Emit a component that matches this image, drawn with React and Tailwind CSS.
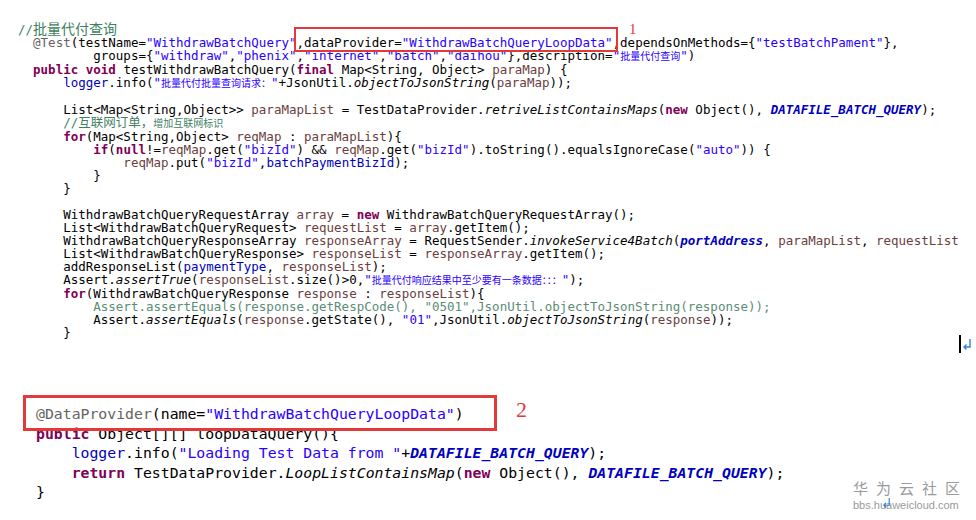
const K = ({ children }) => <span className="font-bold text-[#7f0055]">{children}</span>;
const S = ({ children }) => <span className="text-[#2a00ff]">{children}</span>;
const V = ({ children }) => <span className="text-[#6a3e3e]">{children}</span>;
const F = ({ children }) => <span className="text-[#0000c0]">{children}</span>;
const FI = ({ children }) => <span className="font-bold italic text-[#0000c0]">{children}</span>;
const I = ({ children }) => <span className="italic">{children}</span>;
const A = ({ children }) => <span className="text-[#646464]">{children}</span>;
const C = ({ children }) => <span className="text-[#3f7f5f]">{children}</span>;
const Z = ({ children }) => <span className="text-[10px]">{children}</span>;

function Ln({ ind = 0, children }) {
  return (
    <div>
      {" ".repeat(ind)}
      {children}
    </div>
  );
}

const mono = "font-['DejaVu_Sans_Mono','Noto_Sans_CJK_SC',monospace]";

export default function App() {
  return (
    <div className="relative w-[976px] h-[520px] overflow-hidden bg-white">
      {/* test method */}
      <div className={`${mono} pl-[18px] pt-[23px] text-[12.5px] leading-[13px] text-black whitespace-pre`}>
        <Ln>
          <C>
            //<span className="text-[14px]">批量代付查询</span>
          </C>
        </Ln>
        <Ln ind={2}>
          <A>@Test</A>(testName=<S>"WithdrawBatchQuery"</S>,dataProvider=<S>"WithdrawBatchQueryLoopData"</S>
          ,dependsOnMethods={"{"}
          <S>"testBatchPament"</S>
          {"},"}
        </Ln>
        <Ln ind={10}>
          groups={"{"}
          <S>"withdraw"</S>,<S>"phenix"</S>,<S>"internet"</S>,<S>"batch"</S>,<S>"daihou"</S>
          {"}"},description=
          <S>
            "<Z>批量代付查询</Z>"
          </S>
          )
        </Ln>
        <Ln ind={2}>
          <K>public</K> <K>void</K> testWithdrawBatchQuery(<K>final</K> Map&lt;String, Object&gt; <V>paraMap</V>) {"{"}
        </Ln>
        <Ln ind={6}>
          <F>logger</F>.info(
          <S>
            "<Z>批量代付批量查询请求：</Z>"
          </S>
          +JsonUtil.<I>objectToJsonString</I>(<V>paraMap</V>));
        </Ln>
        <Ln> </Ln>
        <Ln ind={6}>
          List&lt;Map&lt;String,Object&gt;&gt; <V>paraMapList</V> = TestDataProvider.<I>retriveListContainsMaps</I>(
          <K>new</K> Object(), <FI>DATAFILE_BATCH_QUERY</FI>);
        </Ln>
        <Ln ind={6}>
          <C>
            //<span className="text-[12.5px]">互联网订单，</span>
            <Z>增加互联网标识</Z>
          </C>
        </Ln>
        <Ln ind={6}>
          <K>for</K>(Map&lt;String,Object&gt; <V>reqMap</V> : <V>paraMapList</V>){"{"}
        </Ln>
        <Ln ind={10}>
          <K>if</K>(<K>null</K>!=<V>reqMap</V>.get(<S>"bizId"</S>) &amp;&amp; <V>reqMap</V>.get(<S>"bizId"</S>
          ).toString().equalsIgnoreCase(<S>"auto"</S>)) {"{"}
        </Ln>
        <Ln ind={14}>
          <V>reqMap</V>.put(<S>"bizId"</S>,<F>batchPaymentBizId</F>);
        </Ln>
        <Ln ind={10}>{"}"}</Ln>
        <Ln ind={6}>{"}"}</Ln>
        <Ln> </Ln>
        <Ln ind={6}>
          WithdrawBatchQueryRequestArray <V>array</V> = <K>new</K> WithdrawBatchQueryRequestArray();
        </Ln>
        <Ln ind={6}>
          List&lt;WithdrawBatchQueryRequest&gt; <V>requestList</V> = <V>array</V>.getItem();
        </Ln>
        <Ln ind={6}>
          WithdrawBatchQueryResponseArray <V>responseArray</V> = RequestSender.<I>invokeService4Batch</I>(
          <FI>portAddress</FI>, <V>paraMapList</V>, <V>requestList</V>
        </Ln>
        <Ln ind={6}>
          List&lt;WithdrawBatchQueryResponse&gt; <V>responseList</V> = <V>responseArray</V>.getItem();
        </Ln>
        <Ln ind={6}>
          addResponseList(<F>paymentType</F>, <V>responseList</V>);
        </Ln>
        <Ln ind={6}>
          Assert.<I>assertTrue</I>(<V>responseList</V>.size()&gt;0,
          <S>
            "<Z>批量代付响应结果中至少要有一条数据：：：</Z>"
          </S>
          );
        </Ln>
        <Ln ind={6}>
          <K>for</K>(WithdrawBatchQueryResponse <V>response</V> : <V>responseList</V>){"{"}
        </Ln>
        <Ln ind={10}>
          <span className="text-[#5b8c76]">
            Assert.assertEquals(response.getRespCode(), "0501",JsonUtil.objectToJsonString(response));
          </span>
        </Ln>
        <Ln ind={10}>
          Assert.<I>assertEquals</I>(<V>response</V>.getState(), <S>"01"</S>,JsonUtil.<I>objectToJsonString</I>(
          <V>response</V>));
        </Ln>
        <Ln ind={6}>{"}"}</Ln>
      </div>

      {/* data provider */}
      <div className={`${mono} mt-[65px] pl-[36px] text-[14.8px] leading-[19.5px] text-black whitespace-pre`}>
        <Ln>
          <A>@DataProvider</A>(name=<S>"WithdrawBatchQueryLoopData"</S>)
        </Ln>
        <Ln>
          <K>public</K> Object[][] loopDataQuery(){"{"}
        </Ln>
        <Ln ind={4}>
          <F>logger</F>.info(<S>"Loading Test Data from "</S>+<FI>DATAFILE_BATCH_QUERY</FI>);
        </Ln>
        <Ln ind={4}>
          <K>return</K> TestDataProvider.<I>LoopListContainsMap</I>(<K>new</K> Object(), <FI>DATAFILE_BATCH_QUERY</FI>);
        </Ln>
        <Ln>{"}"}</Ln>
      </div>

      {/* annotation boxes */}
      <div className="absolute left-[294px] top-[27px] w-[324px] h-[25px] border-2 border-[#e23a3a]" />
      <div className="absolute left-[629px] top-[22px] font-['Liberation_Serif',serif] text-[15px] leading-none text-[#e23a3a]">
        1
      </div>
      <div className="absolute left-[23px] top-[395px] w-[474px] h-[36px] border-[3px] border-[#e23a3a]" />
      <div className="absolute left-[516px] top-[399px] font-['Liberation_Serif',serif] text-[22px] leading-none text-[#e23a3a]">
        2
      </div>

      {/* caret + return mark */}
      <div className="absolute left-[959px] top-[335px] w-[2px] h-[18px] bg-black" />
      <svg className="absolute left-[962px] top-[338px]" width="10" height="13" viewBox="0 0 10 13">
        <path d="M8 1v8H2.5M4.5 6.5 2 9l2.5 2.5" fill="none" stroke="#3b82d6" strokeWidth="1.4" />
      </svg>

      {/* watermark */}
      <div className="absolute left-[853px] top-[481px] flex flex-col font-['Liberation_Sans','Noto_Sans_CJK_SC',sans-serif] text-[#9a9a9a]">
        <span className="text-[15px] leading-none tracking-[8px]">华为云社区</span>
        <span className="mt-[4px] text-[11px] leading-none">bbs.huaweicloud.com</span>
      </div>
      <svg className="absolute left-[882px] top-[497px]" width="9" height="12" viewBox="0 0 10 13">
        <path d="M8 1v8H2.5M4.5 6.5 2 9l2.5 2.5" fill="none" stroke="#3b82d6" strokeWidth="1.3" />
      </svg>
    </div>
  );
}
